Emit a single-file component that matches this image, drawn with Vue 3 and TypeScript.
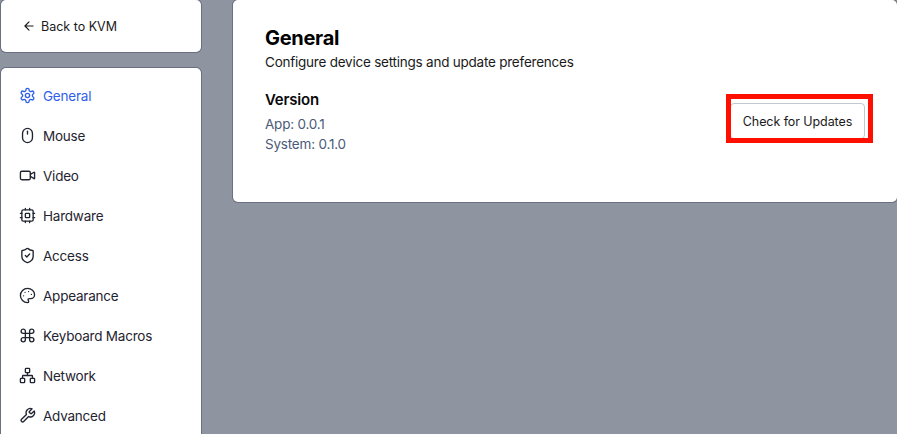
<script setup lang="ts">
interface NavItem { label: string; paths: string[]; active?: boolean }
const items: NavItem[] = [
  { label: 'General', active: true, paths: ['M12.22 2h-.44a2 2 0 0 0-2 2v.18a2 2 0 0 1-1 1.73l-.43.25a2 2 0 0 1-2 0l-.15-.08a2 2 0 0 0-2.73.73l-.22.38a2 2 0 0 0 .73 2.73l.15.1a2 2 0 0 1 1 1.72v.51a2 2 0 0 1-1 1.74l-.15.09a2 2 0 0 0-.73 2.73l.22.38a2 2 0 0 0 2.73.73l.15-.08a2 2 0 0 1 2 0l.43.25a2 2 0 0 1 1 1.73V20a2 2 0 0 0 2 2h.44a2 2 0 0 0 2-2v-.18a2 2 0 0 1 1-1.73l.43-.25a2 2 0 0 1 2 0l.15.08a2 2 0 0 0 2.73-.73l.22-.39a2 2 0 0 0-.73-2.73l-.15-.08a2 2 0 0 1-1-1.74v-.5a2 2 0 0 1 1-1.74l.15-.09a2 2 0 0 0 .73-2.73l-.22-.38a2 2 0 0 0-2.73-.73l-.15.08a2 2 0 0 1-2 0l-.43-.25a2 2 0 0 1-1-1.73V4a2 2 0 0 0-2-2z', 'M15 12a3 3 0 1 1-6 0 3 3 0 0 1 6 0z'] },
  { label: 'Mouse', paths: ['M12 2a7 7 0 0 0-7 7v6a7 7 0 0 0 14 0V9a7 7 0 0 0-7-7z', 'M12 6v4'] },
  { label: 'Video', paths: ['M4 6h10a2 2 0 0 1 2 2v8a2 2 0 0 1-2 2H4a2 2 0 0 1-2-2V8a2 2 0 0 1 2-2z', 'M16 13l5.223 3.482a.5.5 0 0 0 .777-.416V7.87a.5.5 0 0 0-.752-.432L16 10.5'] },
  { label: 'Hardware', paths: ['M6 4h12a2 2 0 0 1 2 2v12a2 2 0 0 1-2 2H6a2 2 0 0 1-2-2V6a2 2 0 0 1 2-2z', 'M10 9h4a1 1 0 0 1 1 1v4a1 1 0 0 1-1 1h-4a1 1 0 0 1-1-1v-4a1 1 0 0 1 1-1z', 'M15 2v2M15 20v2M2 15h2M2 9h2M20 15h2M20 9h2M9 2v2M9 20v2'] },
  { label: 'Access', paths: ['M20 13c0 5-3.5 7.5-7.66 8.95a1 1 0 0 1-.67-.01C7.5 20.5 4 18 4 13V6a1 1 0 0 1 1-1c2 0 4.5-1.2 6.24-2.72a1.17 1.17 0 0 1 1.52 0C14.51 3.81 17 5 19 5a1 1 0 0 1 1 1z', 'M9 12l2 2 4-4'] },
  { label: 'Appearance', paths: ['M12 2C6.5 2 2 6.5 2 12s4.5 10 10 10c.926 0 1.648-.746 1.648-1.688 0-.437-.18-.835-.437-1.125-.29-.289-.438-.652-.438-1.125a1.64 1.64 0 0 1 1.668-1.668h1.996c3.051 0 5.555-2.503 5.555-5.554C21.965 6.012 17.461 2 12 2z', 'M13.5 6.5h.01M17.5 10.5h.01M8.5 7.5h.01M6.5 12.5h.01'] },
  { label: 'Keyboard Macros', paths: ['M15 6v12a3 3 0 1 0 3-3H6a3 3 0 1 0 3 3V6a3 3 0 1 0-3 3h12a3 3 0 1 0-3-3'] },
  { label: 'Network', paths: ['M17 16h4a1 1 0 0 1 1 1v4a1 1 0 0 1-1 1h-4a1 1 0 0 1-1-1v-4a1 1 0 0 1 1-1z', 'M3 16h4a1 1 0 0 1 1 1v4a1 1 0 0 1-1 1H3a1 1 0 0 1-1-1v-4a1 1 0 0 1 1-1z', 'M10 2h4a1 1 0 0 1 1 1v4a1 1 0 0 1-1 1h-4a1 1 0 0 1-1-1V3a1 1 0 0 1 1-1z', 'M5 16v-3a1 1 0 0 1 1-1h12a1 1 0 0 1 1 1v3', 'M12 12V8'] },
  { label: 'Advanced', paths: ['M14.7 6.3a1 1 0 0 0 0 1.4l1.6 1.6a1 1 0 0 0 1.4 0l3.77-3.77a6 6 0 0 1-7.94 7.94l-6.91 6.91a2.12 2.12 0 0 1-3-3l6.91-6.91a6 6 0 0 1 7.94-7.94l-3.76 3.76z'] },
]
</script>

<template>
  <div class="page">
    <aside class="side">
      <div class="card back">
        <svg class="back-icon" viewBox="0 0 24 24" width="14" height="14"><path d="M12 19l-7-7 7-7M19 12H5" /></svg>
        <span>Back to KVM</span>
      </div>
      <nav class="card nav">
        <div v-for="item in items" :key="item.label" class="nav-item" :class="{ active: item.active }">
          <svg class="nav-icon" viewBox="0 0 24 24" width="17" height="17"><path v-for="d in item.paths" :key="d" :d="d" /></svg>
          <span>{{ item.label }}</span>
        </div>
      </nav>
    </aside>
    <main class="card content">
      <h1>General</h1>
      <p class="sub">Configure device settings and update preferences</p>
      <div class="version-row">
        <div>
          <h2>Version</h2>
          <p class="ver">App: 0.0.1</p>
          <p class="ver">System: 0.1.0</p>
        </div>
        <div class="btn-wrap">
          <button class="btn" type="button">Check for Updates</button>
          <div class="mark"></div>
        </div>
      </div>
    </main>
  </div>
</template>

<style>
html, body { margin: 0; background: #8f94a1; }
</style>

<style scoped>
.page {
  width: 897px;
  height: 434px;
  overflow: hidden;
  display: flex;
  align-items: flex-start;
  gap: 32px;
  padding-left: 1px;
  box-sizing: border-box;
  background: #8f94a1;
  font-family: Inter, "Noto Sans", sans-serif;
  color: #0a0a0a;
}
.card {
  background: #fff;
  border-radius: 5px;
  box-shadow: 0 0 0 1px rgba(70, 76, 96, 0.5);
  box-sizing: border-box;
}
.side {
  width: 200px;
  flex: none;
  display: flex;
  flex-direction: column;
  gap: 16px;
}
.back {
  height: 52px;
  display: flex;
  align-items: center;
  gap: 5px;
  padding-left: 21px;
  font-size: 12.5px;
  color: #1a1a1a;
}
.back-icon path {
  fill: none;
  stroke: #1a1a1a;
  stroke-width: 2;
  stroke-linecap: round;
  stroke-linejoin: round;
}
.nav {
  height: 400px;
  padding: 8px 0 0 18px;
  display: flex;
  flex-direction: column;
}
.nav-item {
  height: 40px;
  flex: none;
  display: flex;
  align-items: center;
  gap: 7px;
  font-size: 13.5px;
  line-height: 20px;
  letter-spacing: -0.22px;
  color: #1f2430;
}
.nav-item.active { color: #2f5fe8; }
.nav-icon { flex: none; margin-top: -1px; }
.nav-icon path {
  fill: none;
  stroke: currentColor;
  stroke-width: 1.9;
  stroke-linecap: round;
  stroke-linejoin: round;
}
.content {
  width: 664px;
  height: 202px;
  flex: none;
  padding: 26px 32px 0;
}
h1 {
  margin: 0;
  font-size: 20px;
  line-height: 24px;
  font-weight: 700;
  letter-spacing: -0.3px;
  color: #000;
}
.sub {
  margin: 2px 0 0;
  font-size: 13.5px;
  line-height: 20px;
  letter-spacing: -0.23px;
  color: #1a1a1a;
}
.version-row {
  margin-top: 16px;
  display: flex;
  justify-content: space-between;
  align-items: center;
}
h2 {
  margin: 0 0 2px;
  font-size: 15px;
  line-height: 24px;
  font-weight: 600;
  letter-spacing: -0.2px;
  color: #0a0a0a;
}
.ver {
  margin: 0;
  font-size: 13.5px;
  line-height: 20px;
  letter-spacing: -0.2px;
  color: #4a5a78;
}
.btn-wrap { position: relative; }
.btn {
  display: block;
  width: 135px;
  height: 36px;
  padding: 0;
  background: #fff;
  border: 1px solid #c4c7ce;
  border-radius: 4px;
  font-family: inherit;
  font-size: 12.5px;
  font-weight: 400;
  letter-spacing: -0.08px;
  color: #1a1a1a;
}
.mark {
  position: absolute;
  left: -4px;
  top: -9px;
  width: 147px;
  height: 49px;
  box-sizing: border-box;
  border: 5px solid #ff0f00;
}
</style>
